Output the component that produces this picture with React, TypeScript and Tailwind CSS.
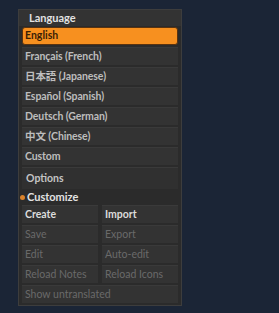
const languages = [
  'Français (French)',
  '日本語 (Japanese)',
  'Español (Spanish)',
  'Deutsch (German)',
  '中文 (Chinese)',
  'Custom',
]

const font = { fontFamily: 'Lato, "Noto Sans CJK JP", sans-serif' }

const Row = ({ text }: { text: string }) => (
  <div className="h-[18px] flex items-center px-[3px] bg-[#333333] border-t border-[#3a3a3a] text-[10.5px] font-bold tracking-[-0.1px] text-[#bdbdbd] whitespace-nowrap">
    {text}
  </div>
)

const Cell = ({ text, dim }: { text: string; dim?: boolean }) => (
  <div
    className={`h-[18px] flex items-center px-[3px] bg-[#333333] border-t border-[#3a3a3a] text-[10.5px] whitespace-nowrap ${dim ? 'font-normal text-[#6a6a6a]' : 'font-bold text-[#dcdcdc]'}`}
  >
    {text}
  </div>
)

export default function App() {
  return (
    <div className="w-[279px] h-[313px] bg-[#1b2536] pt-[9px] pl-[18px]" style={font}>
      <div className="w-[164px] bg-[#2b2b2b] border border-[#3d3d3d] pb-[2px] flex flex-col">
        <div className="h-[16px] flex items-center pl-[10px] bg-[#333333] text-[11px] font-bold text-[#e2e2e2]">
          Language
        </div>

        <div className="px-[3px] flex flex-col gap-[2px]">
          <div className="h-[18px] mt-[1px] flex items-center px-[2px] rounded-[3px] bg-[#f7901f] border border-[#5a3310] text-[10.5px] font-bold text-[#3a1e05]">
            English
          </div>
          {languages.map(l => (
            <Row key={l} text={l} />
          ))}
        </div>

        <div className="mx-[3px] mt-[2px] h-[22px] flex items-center px-[4px] bg-[#303030] border-t border-[#3a3a3a] text-[10.5px] font-bold text-[#c4c4c4]">
          Options
        </div>

        <div className="h-[16px] flex items-center gap-[2px] text-[11px] font-bold text-[#e2e2e2]">
          <span className="ml-[1px] w-[5px] h-[5px] rounded-full bg-[#d9822b]" />
          Customize
        </div>

        <div className="px-[3px] grid grid-cols-2 gap-x-[4px] gap-y-[2px]">
          <Cell text="Create" />
          <Cell text="Import" />
          <Cell text="Save" dim />
          <Cell text="Export" dim />
          <Cell text="Edit" dim />
          <Cell text="Auto-edit" dim />
          <Cell text="Reload Notes" dim />
          <Cell text="Reload Icons" dim />
          <div className="col-span-2">
            <Cell text="Show untranslated" dim />
          </div>
        </div>
      </div>
    </div>
  )
}
